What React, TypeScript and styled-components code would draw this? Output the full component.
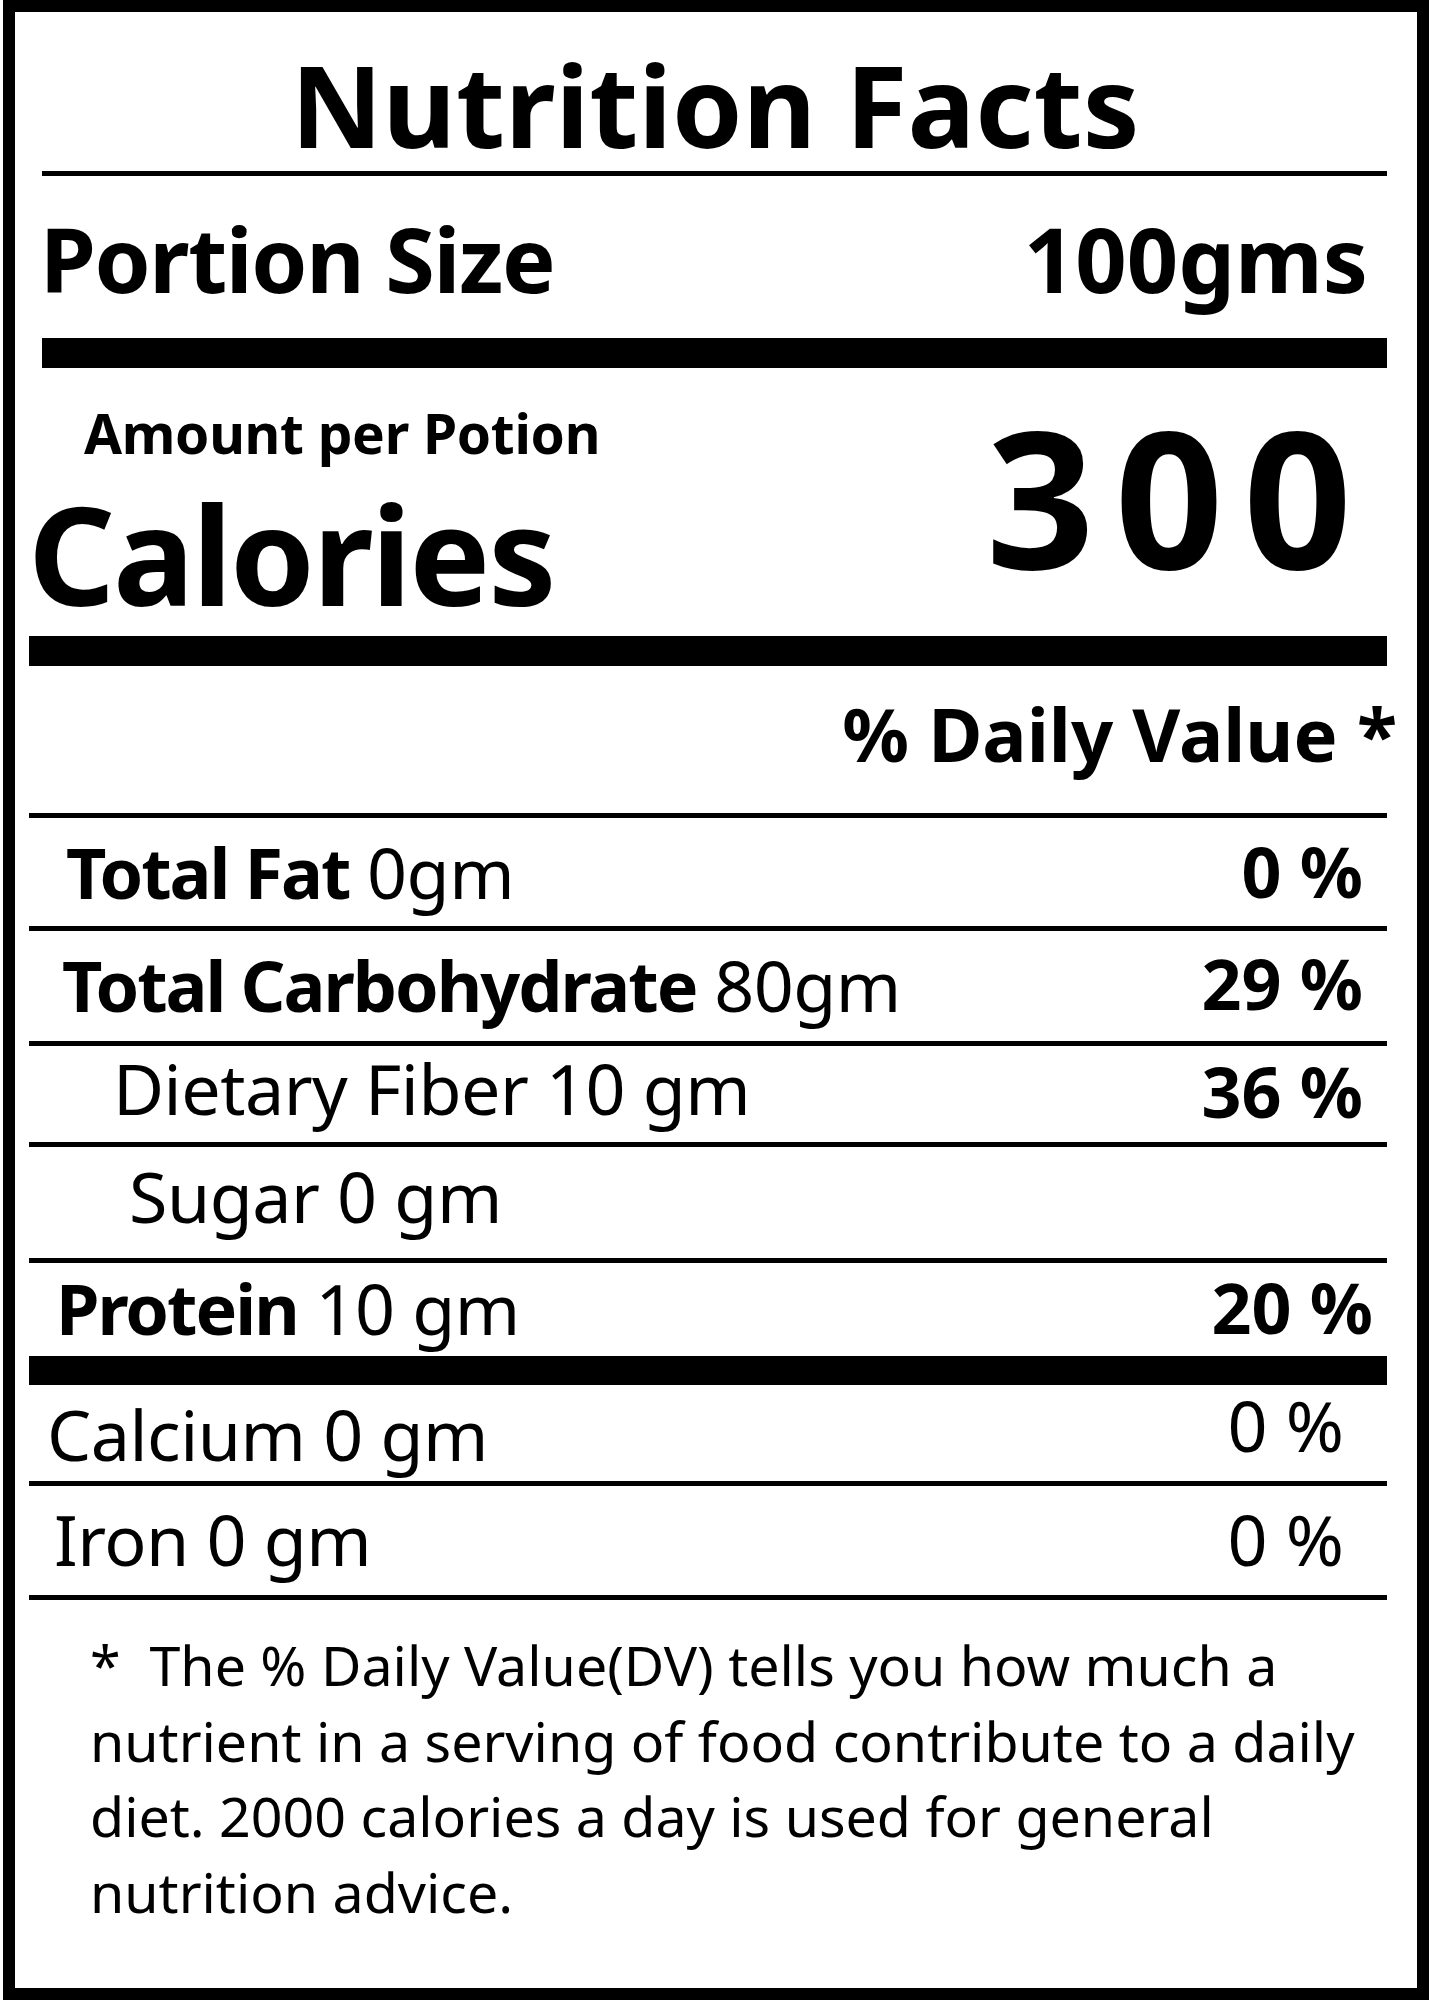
import React from "react";
import styled, { createGlobalStyle } from "styled-components";

const Global = createGlobalStyle`
  html, body { margin: 0; padding: 0; background: #fff; }
  body { font-family: "Noto Sans", "Open Sans", sans-serif; color: #000; }
`;

const Page = styled.div`
  width: 1429px;
  height: 2000px;
  box-sizing: border-box;
  padding-left: 3px;
  overflow: hidden;
`;

const Label = styled.section`
  box-sizing: border-box;
  height: 2000px;
  border: 12px solid #000;
  padding: 0 30px 0 14px;
  display: flex;
  flex-direction: column;
`;

const Title = styled.h1`
  margin: 0;
  padding: 36px 0 10px 14px;
  font-size: 113px;
  font-weight: 700;
  line-height: 1;
  text-align: center;
`;

const Rule = styled.div<{ $weight: number; $inset?: number }>`
  height: ${(p) => p.$weight}px;
  background: #000;
  margin-left: ${(p) => p.$inset ?? 0}px;
  flex: none;
`;

const PortionRow = styled.div`
  display: flex;
  justify-content: space-between;
  padding: 37px 19px 35px 11px;
  font-size: 90px;
  font-weight: 700;
  line-height: 1;
`;

const PortionLabel = styled.span`
  letter-spacing: -1.4px;
`;

const CalSection = styled.div`
  display: flex;
  justify-content: space-between;
  align-items: flex-start;
  padding-bottom: 14px;
`;

const CalLeft = styled.div`
  display: flex;
  flex-direction: column;
  padding-top: 37px;
`;

const Amount = styled.div`
  font-size: 55px;
  font-weight: 700;
  line-height: 1;
  margin-left: 55px;
  letter-spacing: -0.3px;
`;

const Calories = styled.div`
  font-size: 136px;
  font-weight: 700;
  line-height: 1;
  margin-top: 26px;
  margin-left: -1px;
  letter-spacing: -2.4px;
`;

const BigNumber = styled.div`
  font-size: 190px;
  font-weight: 700;
  line-height: 1;
  padding-top: 33px;
  margin-right: 15px;
  letter-spacing: 20px;
`;

const DVHeader = styled.div`
  text-align: right;
  font-size: 74px;
  font-weight: 700;
  line-height: 1;
  padding: 31px 0 42px 0;
  margin-right: -10px;
  white-space: nowrap;
`;

const Row = styled.div<{ $h: number }>`
  display: flex;
  justify-content: space-between;
  align-items: flex-start;
  box-sizing: border-box;
  height: ${(p) => p.$h}px;
  font-size: 70px;
  line-height: 1;
  white-space: nowrap;
`;

const Nutrient = styled.div<{ $pad: number; $indent: number }>`
  padding-top: ${(p) => p.$pad}px;
  margin-left: ${(p) => p.$indent}px;
  font-weight: 400;
  letter-spacing: -0.5px;
`;

const Strong = styled.span`
  font-weight: 700;
  letter-spacing: -2px;
`;

const Percent = styled.div<{ $pad: number; $right: number; $bold?: boolean }>`
  padding-top: ${(p) => p.$pad}px;
  margin-right: ${(p) => p.$right}px;
  font-weight: ${(p) => (p.$bold ? 700 : 400)};
`;

const Footnote = styled.p`
  margin: 0 0 0 61px;
  padding-top: 27px;
  font-size: 55.5px;
  line-height: 75.5px;
  font-weight: 400;
  white-space: nowrap;
`;

type RowData = {
  h: number;
  bold?: string;
  text: string;
  pad: number;
  indent: number;
  value?: string;
  vpad: number;
  right: number;
  vbold?: boolean;
  after: number;
};

const rows: RowData[] = [
  { h: 108, bold: "Total Fat", text: " 0gm", pad: 19, indent: 37, value: "0 %", vpad: 18, right: 24, vbold: true, after: 5 },
  { h: 110, bold: "Total Carbohydrate", text: " 80gm", pad: 19, indent: 33, value: "29 %", vpad: 17, right: 24, vbold: true, after: 5 },
  { h: 96, text: "Dietary Fiber 10 gm", pad: 7, indent: 84, value: "36 %", vpad: 10, right: 24, vbold: true, after: 5 },
  { h: 111, text: "Sugar 0 gm", pad: 14, indent: 100, vpad: 14, right: 24, after: 5 },
  { h: 93, bold: "Protein", text: " 10 gm", pad: 10, indent: 27, value: "20 %", vpad: 9, right: 14, vbold: true, after: 29 },
  { h: 96, text: "Calcium 0 gm", pad: 14, indent: 18, value: "0 %", vpad: 5, right: 43, after: 5 },
  { h: 109, text: "Iron 0 gm", pad: 18, indent: 25, value: "0 %", vpad: 18, right: 43, after: 5 },
];

export default function App() {
  return (
    <Page>
      <Global />
      <Label>
        <Title>Nutrition Facts</Title>
        <Rule $weight={5} $inset={13} />
        <PortionRow>
          <PortionLabel>Portion Size</PortionLabel>
          <span>100gms</span>
        </PortionRow>
        <Rule $weight={30} $inset={13} />
        <CalSection>
          <CalLeft>
            <Amount>Amount per Potion</Amount>
            <Calories>Calories</Calories>
          </CalLeft>
          <BigNumber>300</BigNumber>
        </CalSection>
        <Rule $weight={30} />
        <DVHeader>% Daily Value *</DVHeader>
        <Rule $weight={5} />
        {rows.map((r, i) => (
          <React.Fragment key={i}>
            <Row $h={r.h}>
              <Nutrient $pad={r.pad} $indent={r.indent}>
                {r.bold && <Strong>{r.bold}</Strong>}
                {r.text}
              </Nutrient>
              {r.value && (
                <Percent $pad={r.vpad} $right={r.right} $bold={r.vbold}>
                  {r.value}
                </Percent>
              )}
            </Row>
            <Rule $weight={r.after} />
          </React.Fragment>
        ))}
        <Footnote>
          *{"\u00a0 "}The % Daily Value(DV) tells you how much a
          <br />
          nutrient in a serving of food contribute to a daily
          <br />
          diet. 2000 calories a day is used for general
          <br />
          nutrition advice.
        </Footnote>
      </Label>
    </Page>
  );
}
